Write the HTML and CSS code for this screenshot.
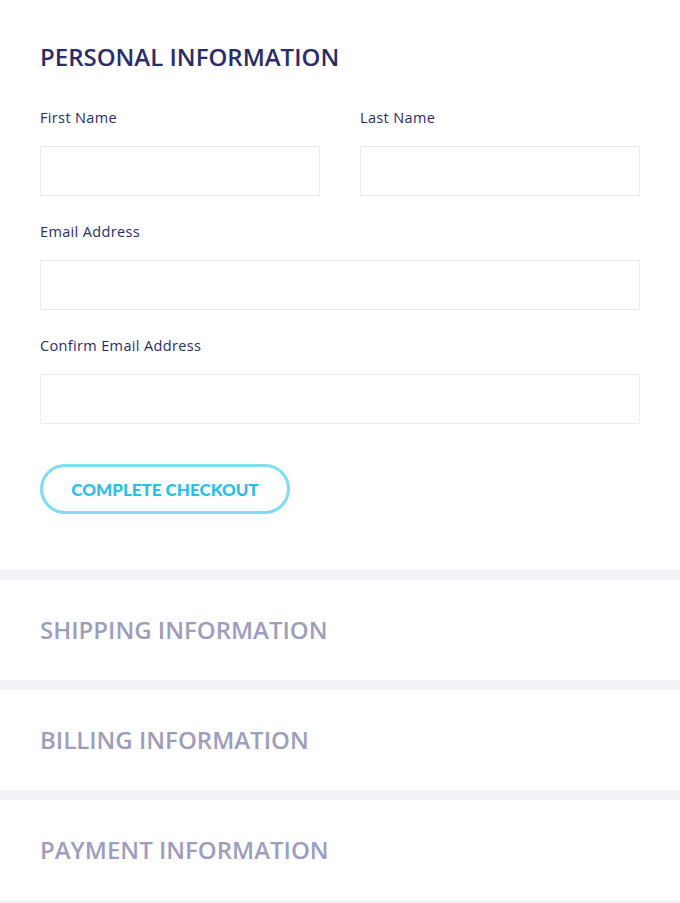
FILE: index.html
```html
<!DOCTYPE html>
<html>
<head>
<meta charset="utf-8">
<link rel="stylesheet" href="styles.css">
</head>
<body>
<div class="page">
  <section class="panel active">
    <h2 class="title">PERSONAL INFORMATION</h2>
    <div class="grid">
      <div class="field">
        <label class="label">First Name</label>
        <input class="input" type="text">
      </div>
      <div class="field">
        <label class="label">Last Name</label>
        <input class="input" type="text">
      </div>
      <div class="field full">
        <label class="label">Email Address</label>
        <input class="input" type="text">
      </div>
      <div class="field full">
        <label class="label">Confirm Email Address</label>
        <input class="input" type="text">
      </div>
    </div>
    <button class="btn">COMPLETE CHECKOUT</button>
  </section>
  <section class="panel collapsed"><h2 class="title muted">SHIPPING INFORMATION</h2></section>
  <section class="panel collapsed"><h2 class="title muted">BILLING INFORMATION</h2></section>
  <section class="panel collapsed"><h2 class="title muted">PAYMENT INFORMATION</h2></section>
</div>
</body>
</html>
```
FILE: styles.css
```css
* { box-sizing: border-box; }
html, body { margin: 0; padding: 0; }
body {
  background: #f3f3f5;
  font-family: "Open Sans", "Noto Sans", sans-serif;
}
.page {
  display: flex;
  flex-direction: column;
  gap: 10px;
}
.panel {
  background: #fff;
  padding: 0 40px;
}
.active {
  padding-top: 41px;
  padding-bottom: 56px;
}
.collapsed {
  height: 100px;
  display: flex;
  align-items: center;
}
.title {
  margin: 0;
  font-family: "Open Sans", sans-serif;
  font-weight: 600;
  font-size: 24px;
  line-height: 32px;
  color: #2a2d68;
  letter-spacing: 0;
}
.muted { color: #9d9ebd; }
.grid {
  margin-top: 35px;
  display: grid;
  grid-template-columns: 1fr 1fr;
  column-gap: 40px;
  row-gap: 26px;
}
.field { display: flex; flex-direction: column; }
.full { grid-column: 1 / 3; }
.label {
  font-family: "Open Sans", sans-serif;
  font-weight: 500;
  font-size: 14.5px;
  line-height: 20px;
  letter-spacing: 0.35px;
  color: #2a2d68;
  margin-bottom: 18px;
}
.input {
  height: 50px;
  border: 1px solid #ececee;
  border-radius: 1px;
  background: #fff;
  margin: 0;
  padding: 0 12px;
  outline: none;
}
.btn {
  margin-top: 40px;
  width: 250px;
  height: 50px;
  border: 3px solid #7fdcf2;
  border-radius: 25px;
  background: #fff;
  color: #27c0e8;
  font-family: "Lato", sans-serif;
  font-weight: 900;
  font-size: 17px;
  letter-spacing: 0;
  padding: 0;
  display: block;
}
```
